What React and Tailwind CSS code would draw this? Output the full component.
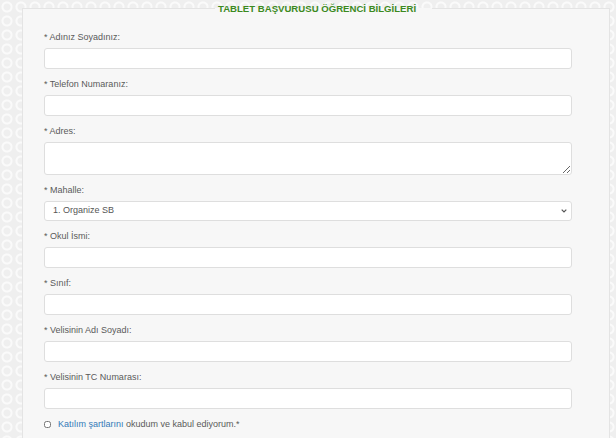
import React, { useState } from 'react';

const fields = [
    { id: 'adsoyad', label: 'Adınız Soyadınız:' },
    { id: 'telefon', label: 'Telefon Numaranız:' },
    { id: 'adres', label: 'Adres:', type: 'textarea' },
    { id: 'mahalle', label: 'Mahalle:', type: 'select' },
    { id: 'okul', label: 'Okul İsmi:' },
    { id: 'sinif', label: 'Sınıf:' },
    { id: 'veliad', label: 'Velisinin Adı Soyadı:' },
    { id: 'velitc', label: 'Velisinin TC Numarası:' },
];

const mahalleler = ['1. Organize SB', '2. Organize SB', 'Merkez', 'Yenimahalle'];

const inputClass =
    'block w-full bg-white border border-[#dedede] rounded-[3px] px-2 text-[9px] text-[#555] outline-none';

function Field({ field, value, onChange }) {
    return (
        <div className="flex flex-col">
            <label htmlFor={field.id} className="text-[9px] leading-[12px] text-[#5a5a5a] mb-[5px]">
                * {field.label}
            </label>
            {field.type === 'textarea' ? (
                <textarea
                    id={field.id}
                    value={value}
                    onChange={(e) => onChange(field.id, e.target.value)}
                    className={`${inputClass} h-[33px] py-1`}
                />
            ) : field.type === 'select' ? (
                <div className="relative">
                    <select
                        id={field.id}
                        value={value || mahalleler[0]}
                        onChange={(e) => onChange(field.id, e.target.value)}
                        className={`${inputClass} h-[20px] appearance-none`}
                    >
                        {mahalleler.map((m) => (
                            <option key={m}>{m}</option>
                        ))}
                    </select>
                    {/* chevron */}
                    <svg
                        className="absolute right-[5px] top-[8px] pointer-events-none"
                        width="6"
                        height="4"
                        viewBox="0 0 6 4"
                    >
                        <path d="M0.7 0.7 L3 3 L5.3 0.7" fill="none" stroke="#555" strokeWidth="1.2" />
                    </svg>
                </div>
            ) : (
                <input
                    id={field.id}
                    type="text"
                    value={value}
                    onChange={(e) => onChange(field.id, e.target.value)}
                    className={`${inputClass} h-[21px]`}
                />
            )}
        </div>
    );
}

function App() {
    const [form, setForm] = useState({});
    const [accepted, setAccepted] = useState(false);

    const handleChange = (id, v) => setForm((f) => ({ ...f, [id]: v }));

    return (
        <div
            className="h-[438px] overflow-hidden pl-[22px] pr-[6px] bg-[#efefef] bg-[radial-gradient(circle,transparent_3px,#fafafa_4px,#fafafa_5px,transparent_6px)] bg-[length:14px_14px]"
            style={{ fontFamily: '"Liberation Sans", Arial, sans-serif' }}
        >
            <fieldset className="border border-[#e4e4e4] bg-[#f7f7f7] pl-[21px] pr-[37px] pb-6 min-h-[460px]">
                <legend className="ml-[171px] pl-[3px] pr-[16px] text-[9.6px] leading-[17px] font-bold text-[#3c8a1e]">
                    TABLET BAŞVURUSU ÖĞRENCİ BİLGİLERİ
                </legend>

                <div className="flex flex-col gap-[9px] pt-[14px]">
                    {fields.map((f) => (
                        <Field key={f.id} field={f} value={form[f.id] || ''} onChange={handleChange} />
                    ))}

                    <label className="flex items-center gap-[7px] text-[9px] text-[#5a5a5a]">
                        <input
                            type="checkbox"
                            checked={accepted}
                            onChange={(e) => setAccepted(e.target.checked)}
                            className="w-[7px] h-[7px] m-0"
                        />
                        <span>
                            <a href="#" className="text-[#337ab7]">Katılım şartlarını</a> okudum ve kabul ediyorum.*
                        </span>
                    </label>
                </div>
            </fieldset>
        </div>
    );
}

export default App;
